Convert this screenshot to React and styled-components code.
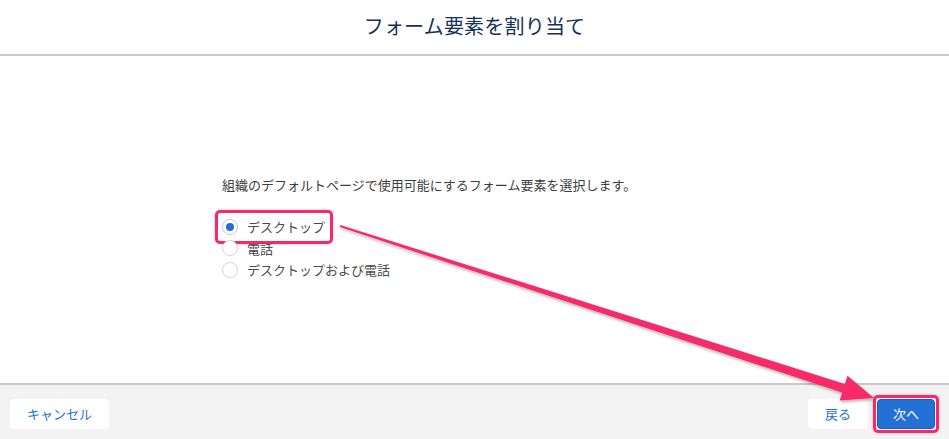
import React from "react";
import styled, { createGlobalStyle } from "styled-components";

const Global = createGlobalStyle`
  html, body { margin: 0; padding: 0; background: #fff; }
  body { font-family: "Noto Sans CJK JP", "Noto Sans", sans-serif; }
  * { box-sizing: border-box; }
`;

const Page = styled.div`
  position: relative;
  width: 949px;
  height: 439px;
  display: flex;
  flex-direction: column;
  overflow: hidden;
`;

const Header = styled.header`
  height: 56px;
  flex: none;
  border-bottom: 2px solid #c9c9c9;
  display: flex;
  align-items: center;
  justify-content: center;
  padding-bottom: 3px;
`;

const Title = styled.h1`
  margin: 0;
  font-size: 20px;
  font-weight: 400;
  color: #16325c;
  letter-spacing: 0.2px;
`;

const Body = styled.main`
  flex: 1;
  padding-top: 119px;
`;

const Content = styled.div`
  width: 505px;
  margin: 0 auto;
`;

const Description = styled.p`
  margin: 0 0 21px;
  font-size: 13px;
  line-height: 20px;
  color: #3e3e3c;
`;

const RadioGroup = styled.div`
  display: flex;
  flex-direction: column;
  align-items: flex-start;
`;

const Option = styled.label`
  position: relative;
  display: inline-flex;
  align-items: center;
  gap: 9px;
  height: 21.5px;
  font-size: 13px;
  color: #4a4a4a;
`;

const RadioDot = styled.span`
  width: 16px;
  height: 16px;
  border-radius: 50%;
  border: 1px solid ${(p) => (p.$checked ? "#c9c9c9" : "#d4d4d4")};
  background: #fff;
  display: flex;
  align-items: center;
  justify-content: center;
  &::after {
    content: "";
    width: 8px;
    height: 8px;
    border-radius: 50%;
    background: ${(p) => (p.$checked ? "#1f6fd6" : "transparent")};
  }
`;

const Highlight = styled.span`
  position: absolute;
  left: ${(p) => p.$l}px;
  right: ${(p) => p.$r}px;
  top: ${(p) => p.$t}px;
  bottom: ${(p) => p.$b}px;
  border: 3px solid #f7296b;
  border-radius: 5px;
  box-shadow: 0 0 3px rgba(0, 0, 0, 0.25);
  pointer-events: none;
`;

const Footer = styled.footer`
  height: 56px;
  flex: none;
  border-top: 2px solid #c9c9c9;
  background: #f3f3f3;
  display: flex;
  align-items: flex-start;
  justify-content: space-between;
  padding: 14px 14px 0 10px;
`;

const Group = styled.div`
  display: flex;
  gap: 9px;
`;

const Button = styled.button`
  position: relative;
  height: 30px;
  padding: 0 ${(p) => p.$pad}px;
  border: 1px solid ${(p) => (p.$primary ? "#1a5fbd" : "#fff")};
  border-radius: 4px;
  background: ${(p) => (p.$primary ? "#2371d5" : "#fff")};
  color: ${(p) => (p.$primary ? "#fff" : "#1b74d4")};
  font-family: "Noto Sans CJK JP", sans-serif;
  font-size: 13px;
  line-height: 28px;
  cursor: pointer;
`;

const Overlay = styled.svg`
  position: absolute;
  left: 0;
  top: 0;
  pointer-events: none;
`;

const options = [
  { label: "デスクトップ", checked: true },
  { label: "電話" },
  { label: "デスクトップおよび電話" },
];

// Arrow geometry
const S = [340, 226];
const T = [874, 398];
const len = Math.hypot(T[0] - S[0], T[1] - S[1]);
const u = [(T[0] - S[0]) / len, (T[1] - S[1]) / len];
const n = [-u[1], u[0]];
const B = [T[0] - 32 * u[0], T[1] - 32 * u[1]];
const pt = (p, k) => `${(p[0] + k * n[0]).toFixed(1)},${(p[1] + k * n[1]).toFixed(1)}`;
const arrowPoints = [
  pt(S, -1),
  pt(B, -4.5),
  pt(B, -13),
  `${T[0]},${T[1]}`,
  pt(B, 13),
  pt(B, 4.5),
  pt(S, 1),
].join(" ");

export default function App() {
  return (
    <Page>
      <Global />
      <Header>
        <Title>フォーム要素を割り当て</Title>
      </Header>
      <Body>
        <Content>
          <Description>
            組織のデフォルトページで使用可能にするフォーム要素を選択します。
          </Description>
          <RadioGroup>
            {options.map((o) => (
              <Option key={o.label}>
                <RadioDot $checked={o.checked} />
                {o.label}
                {o.checked && <Highlight $l={-7} $r={-8} $t={-6} $b={-6} />}
              </Option>
            ))}
          </RadioGroup>
        </Content>
      </Body>
      <Footer>
        <Button $pad={16}>キャンセル</Button>
        <Group>
          <Button $pad={16}>戻る</Button>
          <Button $primary $pad={15}>
            次へ
            <Highlight $l={-5} $r={-5} $t={-5} $b={-5} />
          </Button>
        </Group>
      </Footer>
      <Overlay width="949" height="439" viewBox="0 0 949 439">
        <defs>
          <filter id="sh" x="-10%" y="-10%" width="120%" height="130%">
            <feDropShadow dx="1" dy="2" stdDeviation="1.5" floodColor="#000" floodOpacity="0.3" />
          </filter>
        </defs>
        <polygon points={arrowPoints} fill="#f7296b" filter="url(#sh)" />
      </Overlay>
    </Page>
  );
}
